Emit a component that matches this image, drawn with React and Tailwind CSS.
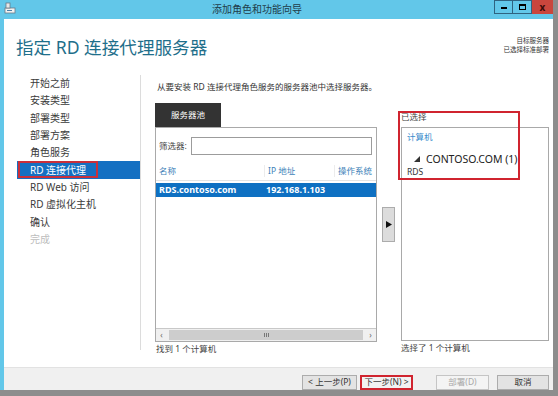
import React from 'react';

const navItems = [
  { label: '开始之前' },
  { label: '安装类型' },
  { label: '部署类型' },
  { label: '部署方案' },
  { label: '角色服务' },
  { label: 'RD 连接代理', active: true },
  { label: 'RD Web 访问' },
  { label: 'RD 虚拟化主机' },
  { label: '确认' },
  { label: '完成', disabled: true },
];

function TitleBar() {
  return (
    <div className="h-[19px] flex items-start bg-[#62c7e9] relative">
      <div className="w-[16px] h-[16px] ml-[4px] mt-[2px]">
        <svg width="12" height="12" viewBox="0 0 12 12">
          <rect x="1" y="6" width="10" height="5" fill="#f2f2f2" stroke="#6a7a88" strokeWidth="0.8" />
          <rect x="2" y="1" width="4" height="5" fill="#e8e8e8" stroke="#6a7a88" strokeWidth="0.8" />
          <rect x="3" y="8" width="5" height="1" fill="#4c7fa8" />
        </svg>
      </div>
      <div className="flex-1 text-center text-[10px] leading-[19px] text-[#1f3d4a]">添加角色和功能向导</div>
      <div className="flex h-[14px]">
        <div className="w-[19px] h-[14px] border border-[#2f6380] flex items-end justify-center pb-[4px]">
          <div className="w-[6px] h-[2px] bg-black" />
        </div>
        <div className="w-[19px] h-[14px] border border-l-0 border-[#2f6380] flex items-center justify-center">
          <div className="w-[7px] h-[6px] border-[1.5px] border-t-[2px] border-black" />
        </div>
        <div className="w-[21px] h-[14px] bg-[#c9463d] flex items-center justify-center text-[10px] font-bold leading-none text-[#3a0b08]">x</div>
      </div>
    </div>
  );
}

function Nav() {
  return (
    <div className="w-[137px] border-r border-[#dcdcdc] h-[275px]">
      {navItems.map((item) => (
        <div
          key={item.label}
          className={`h-[17.3px] flex items-center text-[10px] ${
            item.active ? 'ml-[13px] pl-[13px] bg-[#1570c2] text-white relative' : 'pl-[26px]'
          } ${item.disabled ? 'text-[#bdbdbd]' : item.active ? '' : 'text-[#3a3a3a]'}`}
        >
          {item.label}
          {item.active && <div className="absolute left-[1px] top-[0px] w-[80px] h-[17px] border-2 border-[#c9303b]" />}
        </div>
      ))}
    </div>
  );
}

function ServerPool() {
  return (
    <div className="w-[222px] flex flex-col">
      <div className="w-[66px] h-[24px] bg-[#333333] text-white text-[8.5px] flex items-center justify-center">服务器池</div>
      <div className="h-[215px] border border-[#a9a9a9] flex flex-col">
        <div className="flex items-center mt-[9px] pl-[3px] pr-[4px]">
          <span className="text-[8.5px] text-[#444] w-[32px]">筛选器:</span>
          <div className="flex-1 h-[18px] border border-[#9c9c9c] bg-white" />
        </div>
        <div className="flex items-center h-[19px] mt-[7px] text-[8.5px] text-[#3d7fb8] border-b border-[#e4e4e4]">
          <span className="w-[108px] pl-[3px]">名称</span>
          <span className="w-[70px] pl-[3px] border-l border-[#ececec]">IP 地址</span>
          <span className="flex-1 pl-[3px] border-l border-[#ececec] whitespace-nowrap overflow-hidden">操作系统</span>
        </div>
        <div className="flex items-center h-[14px] mt-[2px] bg-[#0e70c2] text-white text-[9px] font-bold">
          <span className="w-[110px] pl-[3px]">RDS.contoso.com</span>
          <span className="flex-1">192.168.1.103</span>
        </div>
        <div className="flex-1" />
        <div className="h-[13px] flex items-stretch border-t border-[#c8c8c8] bg-[#f0f0f0]">
          <div className="w-[11px] flex items-center justify-center text-[8px] text-[#666]">‹</div>
          <div className="flex-1 mx-[2px] my-[1px] bg-[#cdcdcd] flex items-center justify-center">
            <div className="flex gap-[1px]">
              <div className="w-[1px] h-[4px] bg-[#777]" />
              <div className="w-[1px] h-[4px] bg-[#777]" />
              <div className="w-[1px] h-[4px] bg-[#777]" />
            </div>
          </div>
          <div className="w-[11px] flex items-center justify-center text-[8px] text-[#666]">›</div>
        </div>
      </div>
      <div className="text-[8.5px] text-[#444] mt-[1px] pl-[1px]">找到 1 个计算机</div>
    </div>
  );
}

function Selected() {
  return (
    <div className="w-[148px] flex flex-col relative">
      <div className="h-[24px] pt-[8px] text-[8.5px] leading-[12px] text-[#444]">已选择</div>
      <div className="h-[214px] border border-[#a9a9a9] pl-[5px] pt-[3px]">
        <div className="text-[8.5px] leading-[12px] text-[#3c8dcc]">计算机</div>
        <div className="flex items-center mt-[9px] h-[14px]">
          <svg width="6" height="6" viewBox="0 0 6 6" className="ml-[7px] mr-[6px]">
            <polygon points="6,0 6,6 0,6" fill="#333" />
          </svg>
          <span className="text-[10.5px] text-[#222] leading-none">CONTOSO.COM (1)</span>
        </div>
        <div className="text-[8.5px] leading-[12px] text-[#333]">RDS</div>
      </div>
      <div className="text-[8.5px] text-[#444] mt-[1px]">选择了 1 个计算机</div>
      <div className="absolute left-[-3px] top-[8px] w-[122px] h-[69px] border-2 border-[#d0242f]" />
    </div>
  );
}

function Footer() {
  const base = 'h-[15px] flex items-center justify-center text-[8.5px] border';
  return (
    <div className="h-[23px] bg-[#f0f0f0] border-t border-[#e2e2e2] flex items-start pt-[7px] pr-[4px] justify-end">
      <div className={`${base} w-[55px] bg-[#e3e3e3] border-[#acacac] text-[#333]`}>&lt; 上一步(P)</div>
      <div className={`${base} w-[53px] ml-[3px] bg-[#f2f2f2] border-2 border-[#d0242f] text-[#333]`}>下一步(N) &gt;</div>
      <div className={`${base} w-[53px] ml-[23px] bg-[#f4f4f4] border-[#c5c5c5] text-[#a8a8a8]`}>部署(D)</div>
      <div className={`${base} w-[52px] ml-[8px] bg-[#e3e3e3] border-[#acacac] text-[#333]`}>取消</div>
    </div>
  );
}

export default function App() {
  return (
    <div
      className="w-[558px] h-[396px] bg-[#8d8d8d] overflow-hidden"
      style={{ fontFamily: '"Noto Sans", "Noto Sans CJK SC", sans-serif' }}
    >
      <div className="w-[553px] h-[390px] flex flex-col bg-[#62c7e9]">
        <TitleBar />
        <div className="flex-1 ml-[4px] bg-white flex flex-col">
          <div className="h-[56px] flex items-start justify-between pl-[12px] pr-[4px]">
            <div className="mt-[17px] text-[17.6px] leading-[22px] text-[#1f6f8b]">指定 RD 连接代理服务器</div>
            <div className="mt-[17px] text-right text-[6.5px] leading-[9px] text-[#333]">
              <div>目标服务器</div>
              <div>已选择标准部署</div>
            </div>
          </div>
          <div className="flex">
            <Nav />
            <div className="flex-1 pl-[14px] flex flex-col">
              <div className="mt-[6px] ml-[2px] text-[8.5px] leading-[12px] text-[#333]">从要安装 RD 连接代理角色服务的服务器池中选择服务器。</div>
              <div className="flex mt-[10px]">
                <ServerPool />
                <div className="w-[13px] ml-[5px] mr-[6px]">
                  <div className="mt-[104px] h-[35px] bg-[#dcdcdc] border border-[#acacac] flex items-center justify-center">
                    <svg width="6" height="7" viewBox="0 0 6 7">
                      <polygon points="0,0 6,3.5 0,7" fill="#111" />
                    </svg>
                  </div>
                </div>
                <Selected />
              </div>
            </div>
          </div>
        </div>
        <div className="ml-[4px]">
          <Footer />
        </div>
      </div>
    </div>
  );
}
